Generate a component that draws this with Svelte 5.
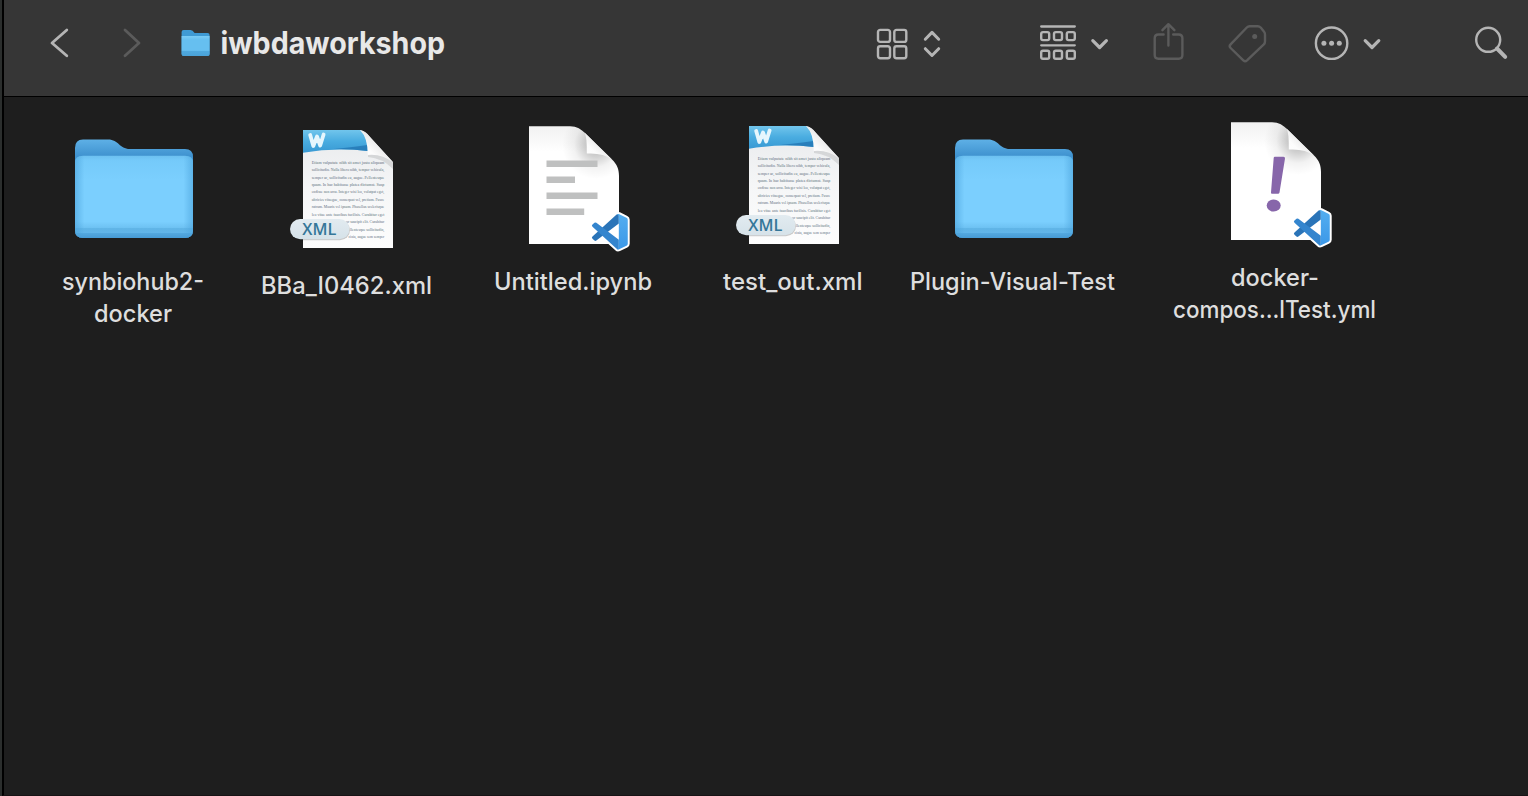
<script>
  const items = [
    { kind: 'folder', shift: 0, lines: [['synbiohub2-', 142], ['docker', 78]] },
    { kind: 'word', shift: 4, lines: [['BBa_I0462.xml', 171]] },
    { kind: 'notebook', shift: 0, lines: [['Untitled.ipynb', 158]] },
    { kind: 'word', shift: 0, lines: [['test_out.xml', 139.5]] },
    { kind: 'folder', shift: 0, lines: [['Plugin-Visual-Test', 205]] },
    { kind: 'yaml', shift: -4, lines: [['docker-', 88], ['compos...lTest.yml', 203]] },
  ];

  const body = [
    ['Etiam vulputate nibh sit amet justo aliquam', 27.7],
    ['sollicitudin. Nulla libero nibh, tempor vehicula,', 27.7],
    ['semper ac, sollicitudin eu, augue. Pellentesque', 27.7],
    ['quam. In hac habitasse platea dictumst. Susp', 27.7],
    ['endisse non arcu. Integer wisi leo, volutpat eget,', 27.7],
    ['ultricies vitaegue, consequat vel, pretium. Fusce', 27.7],
    ['rutrum. Mauris vel ipsum. Phasellus scelerisque', 27.7],
    ['leo vitae ante faucibus facilisis. Curabitur eget', 27.7],
    ['or suscipit elit. Curabitur', 62],
    ['llentesque sollicitudin,', 66],
    ['cinia, augue sem semper', 64.5],
  ];

  const code =
    'M23.15 2.587L18.21.21a1.494 1.494 0 0 0-1.705.29l-9.46 8.63-4.12-3.128a.999.999 0 0 0-1.276.057L.327 7.261A1 1 0 0 0 .326 8.74L3.899 12 .326 15.26a1 1 0 0 0 .001 1.479L1.65 17.94a.999.999 0 0 0 1.276.057l4.12-3.128 9.46 8.63a1.492 1.492 0 0 0 1.704.29l4.942-2.377A1.5 1.5 0 0 0 24 20.06V3.939a1.5 1.5 0 0 0-.85-1.352z';
</script>

<svg class="defs" width="0" height="0" aria-hidden="true">
  <defs>
    <linearGradient id="back" x1="0" y1="0" x2="0" y2="1">
      <stop offset="0" stop-color="#5eb0e6" />
      <stop offset=".17" stop-color="#3f92cf" />
      <stop offset="1" stop-color="#3f92cf" />
    </linearGradient>
    <linearGradient id="front" x1="0" y1="0" x2="0" y2="1">
      <stop offset="0" stop-color="#6cc0f0" />
      <stop offset=".06" stop-color="#75cafa" />
      <stop offset=".3" stop-color="#7bcffe" />
      <stop offset=".8" stop-color="#7bcffe" />
      <stop offset=".88" stop-color="#6dc1f2" />
      <stop offset=".885" stop-color="#5fb4e6" />
      <stop offset=".94" stop-color="#62b6ea" />
      <stop offset=".945" stop-color="#53a8df" />
      <stop offset="1" stop-color="#479bd5" />
    </linearGradient>
    <linearGradient id="minifront" x1="0" y1="0" x2="0" y2="1">
      <stop offset="0" stop-color="#7accf6" />
      <stop offset=".2" stop-color="#66bff0" />
      <stop offset=".72" stop-color="#66bff0" />
      <stop offset=".76" stop-color="#4fa9de" />
      <stop offset="1" stop-color="#4aa2d8" />
    </linearGradient>
    <linearGradient id="side" x1="0" y1="0" x2="1" y2="0">
      <stop offset="0" stop-color="#4ba3dc" stop-opacity=".6" />
      <stop offset=".08" stop-color="#4ba3dc" stop-opacity="0" />
      <stop offset=".92" stop-color="#4ba3dc" stop-opacity="0" />
      <stop offset="1" stop-color="#4ba3dc" stop-opacity=".6" />
    </linearGradient>
    <linearGradient id="paper" x1="0" y1="0" x2="0" y2="1">
      <stop offset="0" stop-color="#f1f1f1" />
      <stop offset=".22" stop-color="#ffffff" />
      <stop offset="1" stop-color="#ffffff" />
    </linearGradient>
    <radialGradient id="shade" gradientUnits="userSpaceOnUse" cx="86" cy="24" r="34">
      <stop offset="0" stop-color="#000" stop-opacity=".3" />
      <stop offset=".35" stop-color="#000" stop-opacity=".18" />
      <stop offset=".65" stop-color="#000" stop-opacity=".05" />
      <stop offset="1" stop-color="#000" stop-opacity="0" />
    </radialGradient>
    <linearGradient id="fold" x1="0" y1="1" x2=".55" y2=".45">
      <stop offset="0" stop-color="#ffffff" />
      <stop offset=".6" stop-color="#fcfcfc" />
      <stop offset="1" stop-color="#ebebeb" />
    </linearGradient>
    <linearGradient id="banner" x1="0" y1="0" x2="0" y2="1">
      <stop offset="0" stop-color="#71c5ec" />
      <stop offset=".5" stop-color="#49ace0" />
      <stop offset="1" stop-color="#3899d3" />
    </linearGradient>
    <linearGradient id="wpaper" x1="0" y1="0" x2="0" y2="1">
      <stop offset="0" stop-color="#e8eaec" />
      <stop offset=".5" stop-color="#f5f6f7" />
      <stop offset="1" stop-color="#fdfdfd" />
    </linearGradient>
    <linearGradient id="pill" x1="0" y1="0" x2="0" y2="1">
      <stop offset="0" stop-color="#e2ebf0" />
      <stop offset="1" stop-color="#d6e2e9" />
    </linearGradient>
    <linearGradient id="blade" x1="0" y1="0" x2="0" y2="1">
      <stop offset="0" stop-color="#54aef0" />
      <stop offset="1" stop-color="#3b98e8" />
    </linearGradient>
  </defs>
</svg>

{#snippet folder()}
  <path d="M5 34V27Q5 18.5 13 18.5H38C49 18.5 49 28 60 28H115Q123 28 123 36V109Q123 117 115 117H13Q5 117 5 109Z" fill="url(#back)" />
  <path d="M5 42Q5 34.7 13 34.7H115Q123 34.7 123 42V109Q123 117 115 117H13Q5 117 5 109Z" fill="url(#front)" />
  <path d="M5 42Q5 34.7 13 34.7H115Q123 34.7 123 42V109Q123 117 115 117H13Q5 117 5 109Z" fill="url(#side)" />
{/snippet}

{#snippet page()}
  <path d="M19 5.2H60C67 5.2 71 8 76 13L102 38.5C107 43.5 109 48 109 55V123H19Z" fill="url(#paper)" />
  <path d="M19 5.2H60C67 5.2 71 8 76 13L102 38.5C107 43.5 109 48 109 55V123H19Z" fill="url(#shade)" />
  <path d="M74.5 11.5Q77 15 76.8 32.5Q93 31.5 102 38.5Z" fill="url(#fold)" />
{/snippet}

{#snippet badge()}
  <g transform="translate(82 92.8) scale(1.49)">
    <path d="M17.5 .2L24 3.5V20.5L17.5 23.8L9 16.5V7.5Z" fill="#fff" />
    <path d={code} fill="#fff" stroke="#fff" stroke-width="2.6" stroke-linejoin="round" />
    <path d="M18 .4V6.55L2.926 18a1 1 0 0 1-1.276-.06L.327 16.74a1 1 0 0 1 0-1.48L16.505.5Q17.2 0 18 .4Z" fill="#2a74b8" />
    <path d="M18 23.6V17.45L2.926 6A1 1 0 0 0 1.65 6.06L.327 7.26a1 1 0 0 0 0 1.48L16.505 23.5Q17.2 24 18 23.6Z" fill="#3485ce" />
    <path d="M18 .15L23.15 2.587Q24 3 24 3.94V20.06Q24 21 23.15 21.41L18.21 23.79Q17.3 24.1 16.6 23.55Q18 23.7 18 22.3V1.7Q18 .3 16.6 .45Q17.3 -.1 18 .15Z" fill="url(#blade)" />
  </g>
{/snippet}

{#snippet word()}
  <path d="M19 5H76Q82 6 86 12L109 37V123H19Z" fill="url(#wpaper)" />
  <path d="M19 5H76Q83 8 84 26Q50 22.5 19 27.7Z" fill="url(#banner)" />
  <path d="M50 24Q70 22 83.5 20V26Q65 23.5 50 24Z" fill="#2377b4" opacity=".8" />
  <path d="M84 29Q98 28 109 37V44Q98 33 84 32Z" fill="#000" opacity=".1" />
  <path d="M76 5Q84 13 83.8 30Q98 28.5 109 37.5L86 12Q81 6.5 76 5Z" fill="url(#fold)" />
  <path d="M26.2 10L29.3 21L33 11.5L36.2 20.5L39.6 9.5" fill="none" stroke="#e6f6fd" stroke-width="3.8" stroke-linecap="round" stroke-linejoin="round" />
  <g class="body">
    {#each body as [line, x], i}
      <text {x} y={38.8 + i * 7.42} textLength={100.3 - x} lengthAdjust="spacingAndGlyphs">{line}</text>
    {/each}
  </g>
  <rect x="6.5" y="95" width="59.5" height="20.2" rx="10.1" fill="#000" opacity=".2" />
  <rect x="6" y="94" width="59.5" height="20.2" rx="10.1" fill="url(#pill)" />
  <text class="tag" x="18.3" y="109.6" textLength="34" lengthAdjust="spacingAndGlyphs">XML</text>
{/snippet}

<div class="screen">
  <div class="window">
    <header>
      <svg class="back" width="20" height="44"><path d="M15.8 10L1 23L15.8 35.8" /></svg>
      <svg class="forward dim" width="20" height="44"><path d="M2 10L16 23L2 35.8" /></svg>
      <svg class="mini" width="30" height="28" viewBox="0.4 0 30 28">
        <path d="M1 3Q1 1 3 1H10Q12 1 14 4H27Q29 4 29 6V25Q29 27 27 27H3Q1 27 1 25Z" fill="#3f9ad4" />
        <path d="M1 7H29V25Q29 27 27 27H3Q1 27 1 25Z" fill="url(#minifront)" />
      </svg>
      <h1><svg width="226" height="44"><text x=".5" y="33.8" textLength="224.5" lengthAdjust="spacingAndGlyphs">iwbdaworkshop</text></svg></h1>
      <svg class="icons" width="32" height="44">
        <rect x="1" y="9.9" width="12" height="12" rx="2.2" /><rect x="17.3" y="9.9" width="12" height="12" rx="2.2" />
        <rect x="1" y="26.2" width="12" height="12" rx="2.2" /><rect x="17.3" y="26.2" width="12" height="12" rx="2.2" />
      </svg>
      <svg class="updown" width="18" height="44"><path d="M2.3 19.2L9 12.4L15.7 19.2M2.3 28.7L9 35.5L15.7 28.7" stroke-width="3" /></svg>
      <svg class="group" width="38" height="44">
        <path d="M1.2 6.5H34.8M1.2 25.3H34.8" stroke-width="2.3" />
        {#each [12.1, 30.8] as y}
          {#each [1.2, 14, 26.8] as x}
            <rect {x} {y} width="8" height="8" rx="1.8" />
          {/each}
        {/each}
      </svg>
      <svg class="caret" width="18" height="44"><path d="M1.8 20.7L8.6 27.5L15.4 20.7" stroke-width="3.2" /></svg>
      <svg class="share dim" width="31" height="44" viewBox=".6 0 31 44">
        <path d="M10.2 14.5H5Q1.3 14.5 1.3 18.2V35Q1.3 38.7 5 38.7H25.3Q29 38.7 29 35V18.2Q29 14.5 25.3 14.5H19.8M15 25.5V4.5M9 10.2L15 4.2L21 10.2" />
      </svg>
      <svg class="label dim" width="39" height="44" viewBox=".7 0 39 44">
        <path d="M21.3 6.3H29.5Q31.2 6.3 32.4 7.5L35.6 11.5Q36.7 12.7 36.7 14.4V21.5Q36.7 23.2 35.5 24.4L18.7 40.3Q16.8 42 15 40.3L2.3 28Q.5 26.2 2.3 24.3L18.5 7.5Q19.7 6.3 21.3 6.3Z" />
        <circle class="solid" cx="26.4" cy="16.6" r="2.5" />
      </svg>
      <svg class="more" width="36" height="44" viewBox=".4 0 36 44">
        <circle cx="17" cy="23.2" r="15.7" />
        <circle class="solid" cx="9.3" cy="23.2" r="2.5" /><circle class="solid" cx="17" cy="23.2" r="2.5" /><circle class="solid" cx="24.7" cy="23.2" r="2.5" />
      </svg>
      <svg class="caret last" width="18" height="44"><path d="M2.2 20.7L9 27.5L15.8 20.7" stroke-width="3.2" /></svg>
      <svg class="search" width="34" height="44"><circle cx="13.2" cy="19.8" r="12" /><path d="M22 28.5L30.2 36.8" stroke-width="4" /></svg>
    </header>

    <main>
      {#each items as item}
        <div class="item" style:margin-top="{item.shift}px">
          <svg class="art" width="128" height="136" viewBox="0 0 128 136">
            {#if item.kind === 'folder'}
              {@render folder()}
            {:else if item.kind === 'word'}
              {@render word()}
            {:else}
              {@render page()}
              {#if item.kind === 'notebook'}
                <path d="M36.5 39.5H87.5V46H36.5ZM36.5 55.5H65V62H36.5ZM36.5 71.5H87.5V78H36.5ZM36.5 87.5H74.2V94H36.5Z" fill="#bfc0c0" />
              {:else}
                <path d="M62.8 39.7H71.5Q73.2 39.7 73 41.5L67.5 75.5Q67.2 76.7 66 76.7H60Q58.9 76.7 59 75.5L61.7 41Q61.8 39.7 62.8 39.7Z" fill="#8766aa" />
                <ellipse cx="61.7" cy="88.6" rx="7" ry="6" fill="#8766aa" />
              {/if}
              {@render badge()}
            {/if}
          </svg>
          {#each item.lines as [text, width]}
            <svg class="name" {width} height="32"><text x="0" y="24" textLength={width} lengthAdjust="spacingAndGlyphs">{text}</text></svg>
          {/each}
        </div>
      {/each}
    </main>
  </div>
</div>

<style>
  :global(body) { margin: 0; background: #1e1e1e; }
  .defs { position: absolute; }
  .screen { box-sizing: border-box; width: 1528px; height: 796px; padding-left: 2px; background: #2b2e2d; overflow: hidden; font-family: Inter, sans-serif; }
  .window { box-sizing: border-box; height: 796px; border-left: 2px solid #000; border-bottom: 1px solid #181315; background: #1e1e1e; }
  header { box-sizing: border-box; height: 97px; display: flex; align-items: flex-start; padding-top: 20px; background: #363636; border-bottom: 1px solid #000; }
  svg { display: block; flex: none; overflow: visible; }
  header svg { fill: none; stroke: #b5b5b5; stroke-width: 2.4; stroke-linecap: round; stroke-linejoin: round; }
  header .dim { stroke: #5b5b5b; }
  header .solid { fill: #b5b5b5; stroke: none; }
  header .dim .solid { fill: #5b5b5b; }
  header .back { margin-left: 47px; stroke-width: 2.8; }
  header .forward { margin-left: 52px; stroke-width: 2.8; }
  header .mini { margin: 9px 0 0 38px; stroke: none; }
  h1 { margin: 0 0 0 9px; height: 44px; }
  header h1 svg { fill: #e8e8e8; stroke: none; font-size: 31px; font-weight: 700; }
  .icons { margin-left: 431px; }
  .updown { margin-left: 14px; }
  .group { margin-left: 99px; }
  .caret { margin-left: 13px; }
  .share { margin-left: 45px; }
  .label { margin-left: 44px; }
  .more { margin-left: 47px; }
  .caret.last { margin-left: 12px; }
  .search { margin-left: 94px; }
  main { display: grid; grid-template-columns: 210px 217px 236px 204px 236px 288px; align-items: start; padding: 24px 0 0 24px; }
  .item { display: flex; flex-direction: column; align-items: center; }
  .art { margin: 0 0 9px 2px; }
  .name { margin-right: 1px; fill: #dedede; font-size: 24px; font-weight: 500; }
  .body { fill: #5d6f7c; font-family: "Liberation Serif", serif; font-size: 4.2px; }
  .tag { fill: #357799; font-family: "Open Sans", sans-serif; font-size: 16.5px; font-weight: 600; }
</style>
